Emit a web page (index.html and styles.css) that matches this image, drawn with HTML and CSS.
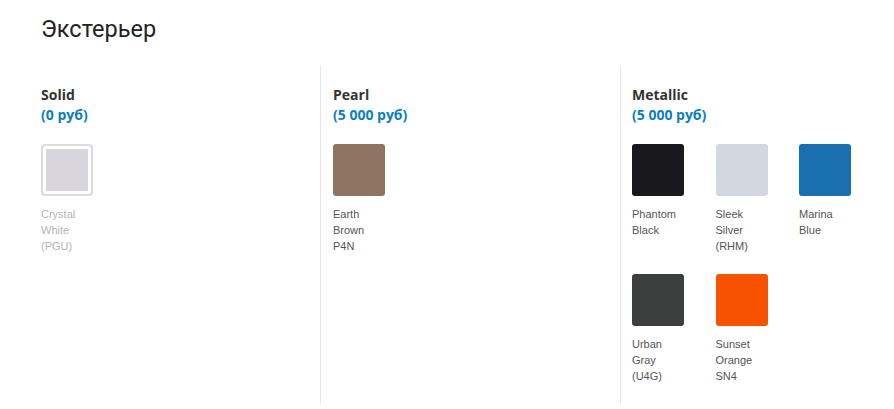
FILE: index.html
```html
<!DOCTYPE html>
<html lang="ru">
<head>
  <meta charset="UTF-8">
  <meta name="viewport" content="width=device-width, initial-scale=1.0">
  <title>Экстерьер</title>
  <link rel="stylesheet" href="styles.css">
</head>
<body>
  <div class="page">
    <h2 class="title">Экстерьер</h2>

    <div class="groups">
      <div class="group">
        <h3 class="group-name">Solid</h3>
        <div class="group-price">(0 руб)</div>
        <div class="swatches">
          <div class="swatch selected disabled">
            <div class="chip" style="background-color: #d8d6dc"></div>
            <div class="swatch-name">Crystal<br>White<br>(PGU)</div>
          </div>
        </div>
      </div>

      <div class="group">
        <h3 class="group-name">Pearl</h3>
        <div class="group-price">(5 000 руб)</div>
        <div class="swatches">
          <div class="swatch">
            <div class="chip" style="background-color: #8e7462"></div>
            <div class="swatch-name">Earth<br>Brown<br>P4N</div>
          </div>
        </div>
      </div>

      <div class="group">
        <h3 class="group-name">Metallic</h3>
        <div class="group-price">(5 000 руб)</div>
        <div class="swatches">
          <div class="swatch">
            <div class="chip" style="background-color: #19181d"></div>
            <div class="swatch-name">Phantom<br>Black</div>
          </div>
          <div class="swatch">
            <div class="chip" style="background-color: #d3d7df"></div>
            <div class="swatch-name">Sleek<br>Silver<br>(RHM)</div>
          </div>
          <div class="swatch">
            <div class="chip" style="background-color: #1a6fae"></div>
            <div class="swatch-name">Marina<br>Blue</div>
          </div>
          <div class="swatch">
            <div class="chip" style="background-color: #3d3e3e"></div>
            <div class="swatch-name">Urban<br>Gray<br>(U4G)</div>
          </div>
          <div class="swatch">
            <div class="chip" style="background-color: #f65200"></div>
            <div class="swatch-name">Sunset<br>Orange<br>SN4</div>
          </div>
        </div>
      </div>
    </div>
  </div>
</body>
</html>
```

FILE: styles.css
```css
body {
  margin: 0;
  padding: 0;
  background-color: #fff;
  font-family: Roboto, "Liberation Sans", Arial, sans-serif;
  color: #222;
}

.page {
  padding: 13px 0 0 28px;
}

.title {
  margin: 0 0 21px 13px;
  font-size: 23.5px;
  font-weight: 400;
  line-height: 32px;
  color: #222;
}

.groups {
  display: grid;
  grid-template-columns: 292px 300px 1fr;
  height: 338px;
}

.group {
  padding: 19px 0 0 13px;
}

.group + .group {
  border-left: 1px solid #e6e6e6;
  padding-left: 12px;
}

.group:last-child {
  padding-left: 11px;
}

.group-name {
  margin: 0;
  font-family: "Open Sans", sans-serif;
  font-size: 14px;
  font-weight: 700;
  line-height: 20px;
  color: #333;
}

.group-price {
  font-family: "Open Sans", sans-serif;
  font-size: 14px;
  font-weight: 700;
  line-height: 20px;
  color: #0a7fc4;
}

.swatches {
  display: grid;
  grid-template-columns: 52px 52px 52px;
  column-gap: 31.5px;
  row-gap: 20px;
  margin-top: 19px;
}

.chip {
  width: 52px;
  height: 52px;
  border-radius: 3px;
  box-sizing: border-box;
}

.swatch.selected .chip {
  border: 2px solid #dcdcdc;
  box-shadow: inset 0 0 0 3px #fff;
  border-radius: 4px;
}

.swatch-name {
  margin-top: 10px;
  font-family: "Liberation Sans", Arial, sans-serif;
  font-size: 11px;
  line-height: 16px;
  color: #555;
  height: 48px;
}

.swatch.disabled .swatch-name {
  color: #b4b4b4;
}
```
